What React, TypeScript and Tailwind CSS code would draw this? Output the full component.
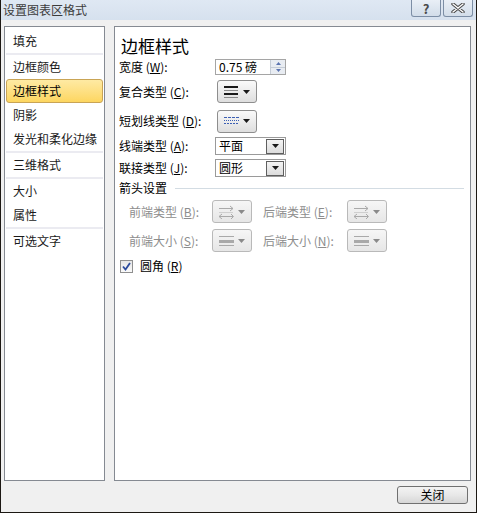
import React from 'react';

const font = { fontFamily: '"Noto Sans CJK SC", "Noto Sans", sans-serif' };

const navItems: (string | null)[] = [
  '填充', null, '边框颜色', '边框样式', '阴影', '发光和柔化边缘', null, '三维格式', null, '大小', '属性', null, '可选文字',
];

function Caret({ color = '#1a1a1a' }: { color?: string }) {
  return (
    <svg width="7" height="4" viewBox="0 0 7 4">
      <path d="M0 0h7L3.5 4z" fill={color} />
    </svg>
  );
}

function DropButton({ children, disabled }: { children: React.ReactNode; disabled?: boolean }) {
  return (
    <div
      className={`flex h-[23px] w-[40px] items-center justify-between rounded-[3px] border pl-[6px] pr-[6px] ${
        disabled
          ? 'border-[#b9b9b9] bg-gradient-to-b from-[#f6f6f6] to-[#e6e6e6]'
          : 'border-[#8e8e8e] bg-gradient-to-b from-[#fafafa] to-[#dedede]'
      }`}
    >
      {children}
      <Caret color={disabled ? '#8a8a8a' : '#1a1a1a'} />
    </div>
  );
}

function Select({ value }: { value: string }) {
  return (
    <div className="flex h-[18px] w-[71px] items-center border border-[#9a9a9a] bg-white">
      <span className="flex-1 pl-[3px] text-[12px] leading-none text-black">{value}</span>
      <div className="mr-px flex h-[15px] w-[18px] items-center justify-center border border-[#5f5f5f] bg-gradient-to-b from-[#f4f4f4] to-[#dcdcdc]">
        <Caret />
      </div>
    </div>
  );
}

function Label({ text, k, disabled, w = 'w-[96px]' }: { text: string; k: string; disabled?: boolean; w?: string }) {
  return (
    <span className={`${w} shrink-0 text-[12px] leading-none ${disabled ? 'text-[#8d8d8d]' : 'text-black'}`}>
      {text} (<span className="underline">{k}</span>):
    </span>
  );
}

const arrowIcon = (
  <svg width="15" height="14" viewBox="0 0 15 14" fill="none" stroke="#a9a9a9" strokeWidth="1">
    <path d="M0 3.5h14M11 1l3 2.5L11 6" />
    <path d="M0 7.5h14" stroke="#cfcfcf" />
    <path d="M0 11.5h14M3 9l-3 2.5L3 14M12 9l2.5 2.5L12 14" />
  </svg>
);

const sizeIcon = (
  <svg width="15" height="12" viewBox="0 0 15 12">
    <rect x="0" y="1" width="15" height="1" fill="#a9a9a9" />
    <rect x="0" y="5" width="15" height="3" fill="#a9a9a9" />
    <rect x="0" y="10" width="15" height="1" fill="#a9a9a9" />
  </svg>
);

export default function App() {
  return (
    <div style={font} className="flex h-[513px] w-[477px] flex-col border-x border-b border-[#1c1813] bg-[#f0f0f0]">
      {/* title bar */}
      <div className="flex h-[20px] shrink-0 items-start bg-gradient-to-b from-[#dfe8f3] to-[#d6e1ee]">
        <span className="ml-[2px] mt-[2px] flex-1 text-[12px] leading-[16px] text-[#3c3c3c]">设置图表区格式</span>
        <div className="flex h-[17px] w-[30px] items-center justify-center rounded-b-[3px] border border-t-0 border-[#7c8ea5] bg-gradient-to-b from-[#e9eff6] to-[#d2dde9]">
          <span className="text-[13px] font-bold leading-[15px] text-[#4a4a4a]">?</span>
        </div>
        <div className="ml-[2px] mr-[3px] flex h-[17px] w-[30px] items-center justify-center rounded-b-[3px] border border-t-0 border-[#7c8ea5] bg-gradient-to-b from-[#e9eff6] to-[#d2dde9]">
          <svg width="14" height="10" viewBox="0 0 14 10">
            <path d="M2 1l10 8M12 1L2 9" stroke="#4a4a4a" strokeWidth="3.4" strokeLinecap="round" />
            <path d="M2 1l10 8M12 1L2 9" stroke="#ffffff" strokeWidth="1.4" strokeLinecap="round" />
          </svg>
        </div>
      </div>

      {/* panels */}
      <div className="mt-[6px] flex h-[455px] shrink-0">
        <div className="ml-[3px] w-[101px] border border-[#858a92] bg-white pt-[2px]">
          {navItems.map((item, i) =>
            item === null ? (
              <div key={i} className="mx-px h-[2px] bg-[#ebebf1]" />
            ) : item === '边框样式' ? (
              <div
                key={i}
                className="mx-px flex h-[24px] items-center rounded-[3px] border border-[#c9a455] bg-gradient-to-b from-[#feeaa3] to-[#fdd65f] pl-[6px] text-[12px] text-black"
              >
                {item}
              </div>
            ) : (
              <div key={i} className="mx-px flex h-[24px] items-center pl-[7px] text-[12px] text-[#1a1a1a]">
                {item}
              </div>
            ),
          )}
        </div>

        <div className="ml-[9px] flex w-[357px] flex-col border border-[#858a92] bg-white pl-[4px] pt-[8px]">
          <div className="flex h-[20px] items-center pl-[2px] text-[17px] leading-none text-black">边框样式</div>

          <div className="mt-[4px] flex h-[16px] items-center">
            <Label text="宽度" k="W" />
            <div className="flex h-[16px] w-[71px] items-center border border-[#a5a5a5] bg-white">
              <span className="flex-1 pl-[3px] text-[12px] leading-none text-black">0.75 磅</span>
              <div className="flex h-[14px] w-[15px] flex-col border-l border-[#c5ccd6] bg-[#e8ecf2]">
                <div className="flex flex-1 items-center justify-center border-b border-[#c5ccd6]">
                  <svg width="5" height="3" viewBox="0 0 5 3"><path d="M0 3h5L2.5 0z" fill="#5a74b0" /></svg>
                </div>
                <div className="flex flex-1 items-center justify-center">
                  <svg width="5" height="3" viewBox="0 0 5 3"><path d="M0 0h5L2.5 3z" fill="#5a74b0" /></svg>
                </div>
              </div>
            </div>
          </div>

          <div className="mt-[5px] flex h-[23px] items-center">
            <Label text="复合类型" k="C" />
            <div className="ml-[2px]">
              <DropButton>
                <svg width="14" height="12" viewBox="0 0 14 12">
                  <rect x="0" y="0" width="14" height="2" fill="#1a1a1a" />
                  <rect x="0" y="4" width="14" height="1" fill="#8a8a8a" />
                  <rect x="0" y="7" width="14" height="2" fill="#1a1a1a" />
                  <rect x="0" y="11" width="14" height="1" fill="#8a8a8a" />
                </svg>
              </DropButton>
            </div>
          </div>

          <div className="mt-[6px] flex h-[24px] items-center">
            <Label text="短划线类型" k="D" />
            <div className="ml-[2px]">
              <DropButton>
                <svg width="15" height="10" viewBox="0 0 15 10" stroke="#3c5fb4" strokeWidth="1">
                  <path d="M0 1.5h15" strokeDasharray="3 1" />
                  <path d="M0 4.5h15" strokeDasharray="1 1" />
                  <path d="M0 7.5h15" strokeDasharray="2 1" />
                </svg>
              </DropButton>
            </div>
          </div>

          <div className="mt-[4px] flex h-[18px] items-center">
            <Label text="线端类型" k="A" />
            <Select value="平面" />
          </div>

          <div className="mt-[4px] flex h-[18px] items-center">
            <Label text="联接类型" k="J" />
            <Select value="圆形" />
          </div>

          <div className="mt-[3px] flex h-[16px] items-center">
            <span className="text-[12px] leading-none text-black">箭头设置</span>
            <div className="ml-[8px] mr-[6px] h-px flex-1 bg-[#d3dce3]" />
          </div>

          <div className="mt-[4px] flex h-[23px] items-center pl-[10px]">
            <Label text="前端类型" k="B" disabled w="w-[83px]" />
            <DropButton disabled>{arrowIcon}</DropButton>
            <div className="ml-[11px]">
              <Label text="后端类型" k="E" disabled w="w-[84px] block" />
            </div>
            <DropButton disabled>{arrowIcon}</DropButton>
          </div>

          <div className="mt-[6px] flex h-[23px] items-center pl-[10px]">
            <Label text="前端大小" k="S" disabled w="w-[83px]" />
            <DropButton disabled>{sizeIcon}</DropButton>
            <div className="ml-[11px]">
              <Label text="后端大小" k="N" disabled w="w-[84px] block" />
            </div>
            <DropButton disabled>{sizeIcon}</DropButton>
          </div>

          <div className="mt-[7px] flex h-[14px] items-center pl-px">
            <div className="flex h-[13px] w-[13px] items-center justify-center border border-[#8f8f8f] bg-gradient-to-b from-[#e6e6e6] to-[#fafafa]">
              <svg width="9" height="9" viewBox="0 0 9 9">
                <path d="M1 4.5l2.5 3L8 1" stroke="#2b4a9c" strokeWidth="1.8" fill="none" />
              </svg>
            </div>
            <span className="ml-[7px] text-[12px] leading-none text-black">
              圆角 (<span className="underline">R</span>)
            </span>
          </div>
        </div>
      </div>

      {/* footer */}
      <div className="mt-[5px] flex justify-end pr-[8px]">
        <button className="flex h-[18px] w-[71px] items-center justify-center rounded-[3px] border border-[#707070] bg-gradient-to-b from-[#f3f3f3] via-[#e8e8e8] to-[#d6d6d6] text-[12px] leading-none text-black">
          关闭
        </button>
      </div>
    </div>
  );
}
